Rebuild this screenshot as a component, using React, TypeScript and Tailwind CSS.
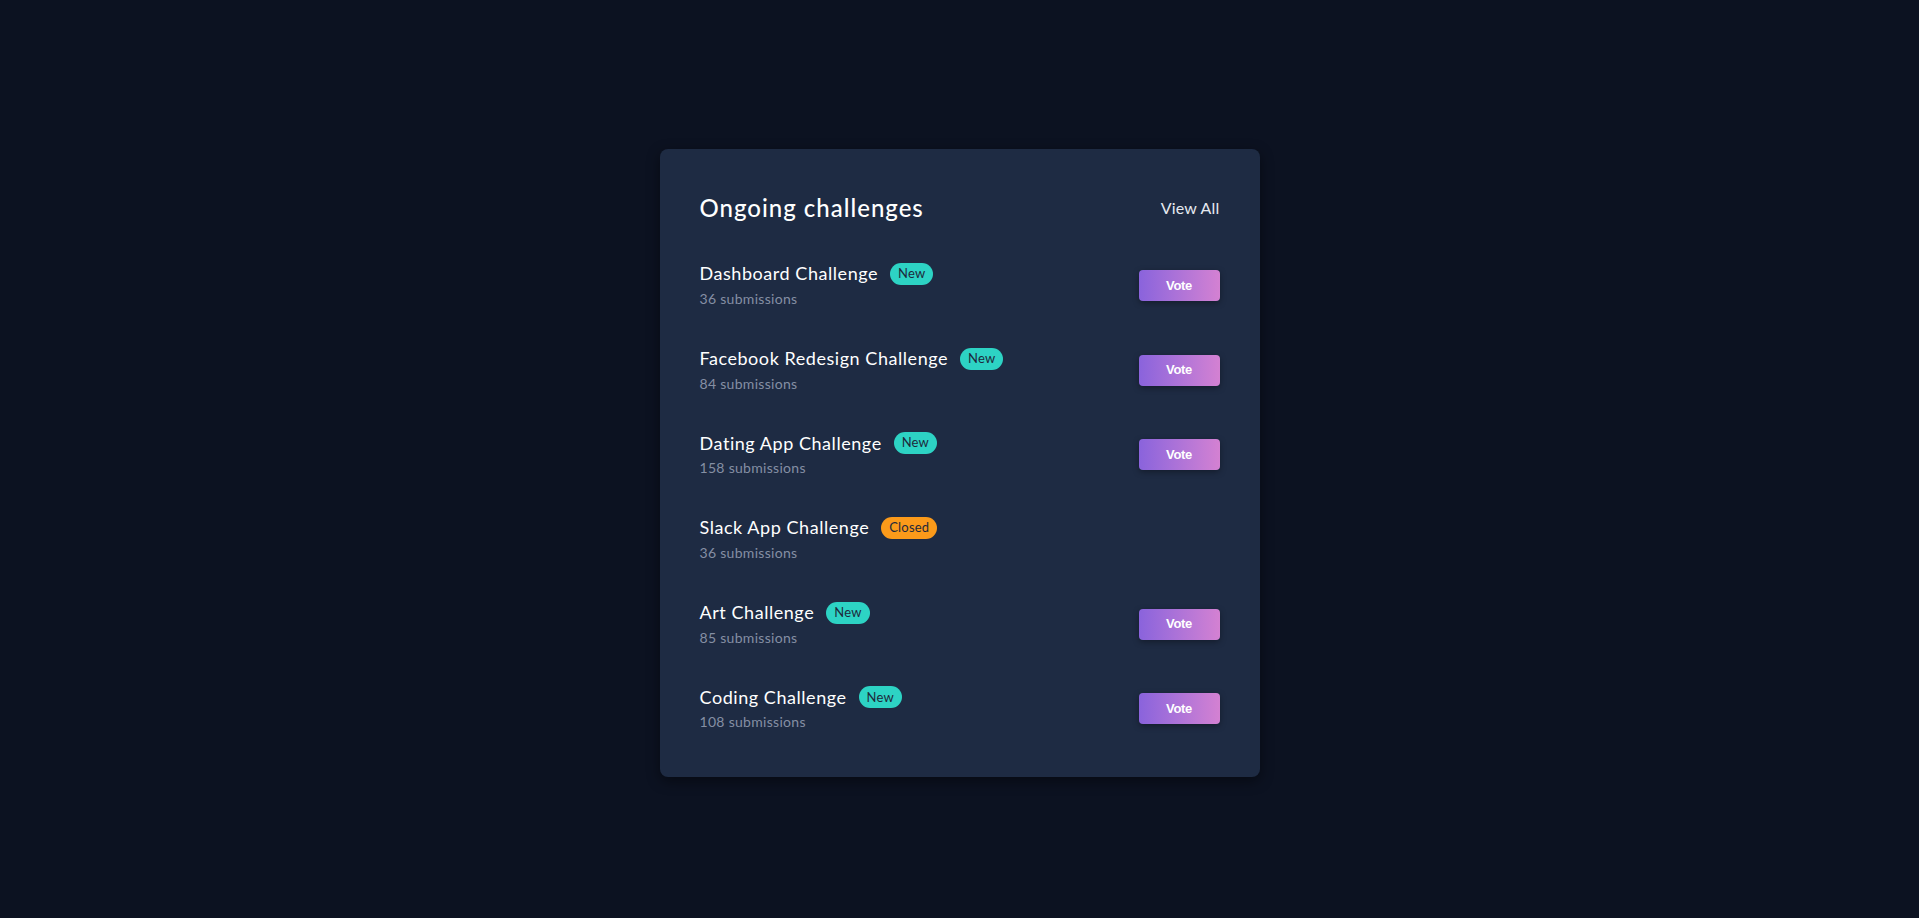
import React from 'react';

type Challenge = {
  name: string;
  status: 'New' | 'Closed';
  submissions: number;
};

const challenges: Challenge[] = [
  { name: 'Dashboard Challenge', status: 'New', submissions: 36 },
  { name: 'Facebook Redesign Challenge', status: 'New', submissions: 84 },
  { name: 'Dating App Challenge', status: 'New', submissions: 158 },
  { name: 'Slack App Challenge', status: 'Closed', submissions: 36 },
  { name: 'Art Challenge', status: 'New', submissions: 85 },
  { name: 'Coding Challenge', status: 'New', submissions: 108 },
];

const App: React.FC = () => {
  return (
    <div className="min-h-screen bg-[#0c1221] flex justify-center pt-[149px] font-['Lato','Open_Sans',sans-serif]">
      <div className="w-[600px] h-[628px] bg-[#1e2b43] rounded-lg shadow-[0_4px_14px_rgba(0,0,0,0.45)] px-10 pt-[43px]">
        {/* Header */}
        <div className="flex items-center justify-between h-8 mb-[19px]">
          <h2 className="text-[24px] font-medium tracking-[1px] text-white leading-8">Ongoing challenges</h2>
          <a href="#" className="text-[16px] font-normal tracking-[0.2px] text-[#e5e9f0]">View All</a>
        </div>

        {/* Challenge list */}
        <div>
          {challenges.map((c) => (
            <div key={c.name} className="h-[84.7px] flex items-center justify-between">
              <div>
                <div className="flex items-center h-6">
                  <span className="text-[18px] font-normal tracking-[0.55px] text-white">{c.name}</span>
                  <span
                    className={`ml-3 h-[22px] px-2 rounded-full flex items-center text-[13px] tracking-[0.2px] text-[#1e293b] ${
                      c.status === 'New' ? 'bg-[#2dd3c4]' : 'bg-[#fb9a1a]'
                    }`}
                  >
                    {c.status}
                  </span>
                </div>
                <p className="mt-[3px] text-[14px] leading-5 tracking-[0.3px] text-[#858fa3]">{c.submissions} submissions</p>
              </div>
              {c.status === 'New' && (
                <button className="w-[81px] h-[31px] rounded bg-gradient-to-r from-[#8a63dc] to-[#d481d2] text-white text-[13px] font-bold tracking-[-0.3px] font-['Liberation_Sans',Arial,sans-serif] shadow-[0_2px_6px_rgba(0,0,0,0.35)]">
                  Vote
                </button>
              )}
            </div>
          ))}
        </div>
      </div>
    </div>
  );
};

export default App;
